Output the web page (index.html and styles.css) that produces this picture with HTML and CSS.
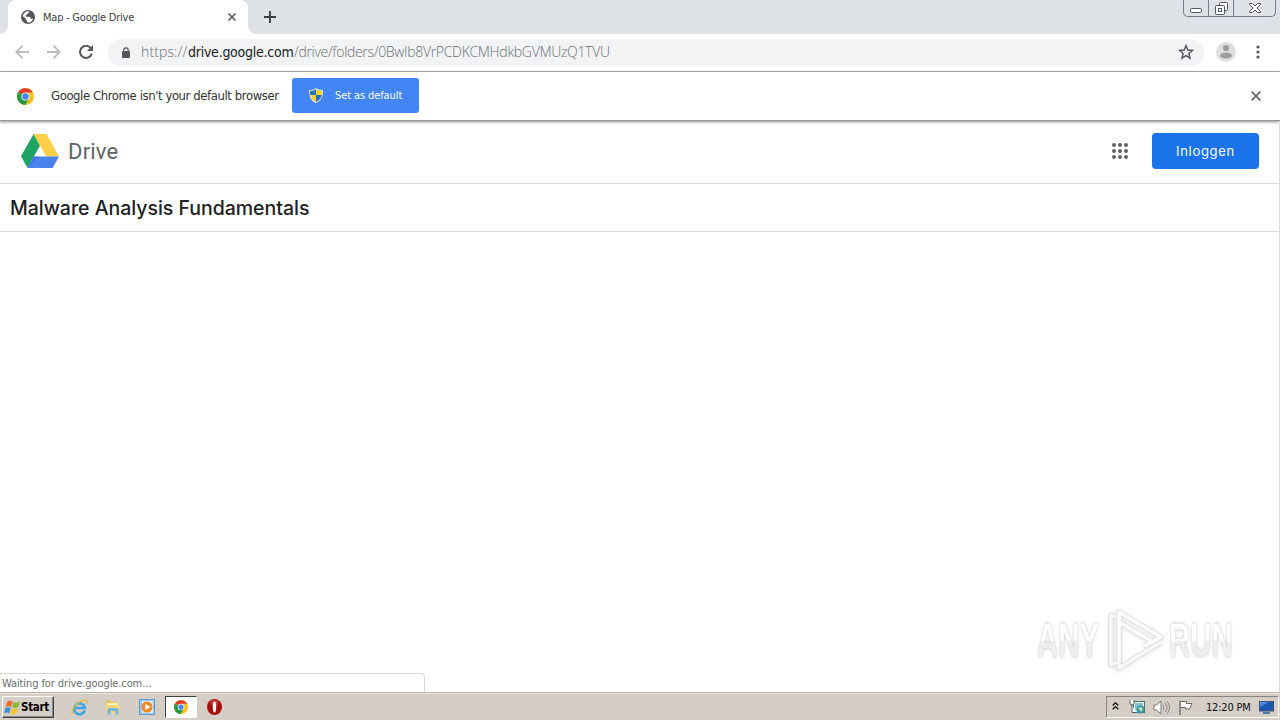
FILE: index.html
```html
<!doctype html>
<html lang="nl">
<head>
<meta charset="UTF-8">
<meta name="viewport" content="width=device-width,initial-scale=1">
<title>Map - Google Drive</title>
<link rel="stylesheet" href="styles.css">
</head>
<body>

<!-- shared chrome logo -->
<svg class="defs" width="0" height="0">
  <symbol id="chrome" viewBox="0 0 24 24">
    <circle cx="12" cy="12" r="12" fill="#fbc116"/>
    <path d="M12 12L1.6 6A12 12 0 0 1 22.4 6.5H12z" fill="#e33b2e"/>
    <path d="M1.6 6A12 12 0 0 0 11.5 24L17 14.8 12 12z" fill="#249a41"/>
    <circle cx="12" cy="12" r="5.7" fill="#fff"/>
    <circle cx="12" cy="12" r="4.5" fill="#4285f4"/>
  </symbol>
</svg>

<!-- ========================  TABS  ======================== -->
<header class="tabstrip">
  <div class="tab">
    <svg class="globe" width="14" height="14" viewBox="0 0 14 14"><circle cx="7" cy="7" r="7" fill="#54585d"/><path d="M8.3 1.5c-1 1.3-.4 2-1.8 2.2-1.2.2-.6 1.7-1.8 1.8v1.2h3.6c1.4.2.7 2 2.1 2.1h1.8A5.3 5.3 0 0 1 6 12.2v-1.7c-1.5-.2-1-2-1.8-2.6L1.7 6.3A5.5 5.5 0 0 1 8.3 1.5z" fill="#fff"/></svg>
    <span class="tab-title">Map - Google Drive</span>
    <svg class="tab-close" width="8" height="8" viewBox="0 0 8 8"><path d="M.5.5l7 7M7.5.5l-7 7" stroke="#5f6368" stroke-width="1.6"/></svg>
  </div>
  <svg class="new-tab" width="12" height="12" viewBox="0 0 12 12"><path d="M6 0v12M0 6h12" stroke="#3c4043" stroke-width="1.9"/></svg>
  <div class="window-buttons">
    <span class="wb"><svg width="12" height="5" viewBox="0 0 12 5"><rect x=".5" y=".5" width="11" height="4" rx="1" fill="#fff" stroke="#50545f"/></svg></span>
    <span class="wb"><svg width="13" height="13" viewBox="0 0 13 13" fill="#fff" stroke="#50545f"><rect x="4.5" y=".5" width="8" height="8" rx="1"/><rect x=".5" y="3.5" width="9" height="9" rx="1"/><rect x="3.5" y="6.5" width="3" height="3"/></svg></span>
    <span class="wb wide"><svg width="12" height="10" viewBox="0 0 12 10"><path d="M.5.5h3L6 3 8.5.5h3v1L8 5l3.500 3.500v1h-3L6 7 3.500 9.500h-3v-1L4 5 .5 1.500z" fill="#fff" stroke="#50545f"/></svg></span>
  </div>
</header>

<!-- ========================  TOOLBAR  ===================== -->
<div class="toolbar">
  <svg width="14" height="14" viewBox="0 0 14 14" fill="none" stroke="#b9bbbd" stroke-width="1.8"><path d="M14 7H1.500M7.500 .7L1.300 7l6.200 6.300"/></svg>
  <svg width="14" height="14" viewBox="0 0 14 14" fill="none" stroke="#b9bbbd" stroke-width="1.8"><path d="M0 7h12.500M6.500 .7L12.700 7l-6.200 6.300"/></svg>
  <svg width="14" height="14" viewBox="0 0 14 14"><path d="M11.800 3.200A6 6 0 1 0 12.800 8.600" fill="none" stroke="#54585d" stroke-width="2"/><path d="M14 0v6H8z" fill="#54585d"/></svg>
  <div class="omnibox">
    <svg class="lock" width="8" height="11" viewBox="0 0 8 11"><rect y="4" width="8" height="7" rx="1" fill="#54585d"/><path d="M1.800 5V3a2.200 2.200 0 0 1 4.400 0v2" fill="none" stroke="#54585d" stroke-width="1.2"/></svg>
    <span class="url"><i>https://</i><b>drive.google.com</b><em>/drive/folders/0BwIb8VrPCDKCMHdkbGVMUzQ1TVU</em></span>
    <svg class="star" width="16" height="16" viewBox="0 0 16 16"><path d="M8 1.700l1.800 4.300 4.700.4-3.600 3.100 1.100 4.600L8 11.600l-4 2.500 1.100-4.600L1.500 6.400l4.700-.4z" fill="none" stroke="#54585d" stroke-width="1.5"/></svg>
  </div>
  <svg class="avatar" width="20" height="20" viewBox="0 0 20 20"><circle cx="10" cy="10" r="10" fill="#dedfe0"/><circle cx="10" cy="6" r="3.1" fill="#9a9c9e"/><ellipse cx="10" cy="13.5" rx="6" ry="3" fill="#9a9c9e"/></svg>
  <svg class="menu-dots" width="4" height="14" viewBox="0 0 4 14" fill="#54585d"><circle cx="2" cy="2" r="1.6"/><circle cx="2" cy="7" r="1.6"/><circle cx="2" cy="12" r="1.6"/></svg>
</div>

<!-- ========================  INFOBAR  ===================== -->
<div class="infobar">
  <svg width="17" height="17"><use href="#chrome"/></svg>
  <span class="infobar-text">Google Chrome isn't your default browser</span>
  <button class="default-button">
    <svg width="14" height="15" viewBox="0 0 14 15"><path d="M7 0c2 1.500 4 2 7 2 0 7-2 11-7 13C2 13 0 9 0 2c3 0 5-.5 7-2z" fill="#e5e7dc"/><path d="M7 1.300V7H1.200L1 3c2.500 0 4.500-.7 6-1.700z" fill="#2c6fbb"/><path d="M7 1.300C8.500 2.300 10.500 3 13 3l-.2 4H7z" fill="#fbd22d"/><path d="M1.200 7H7v6.900C3.500 12.400 1.700 10 1.200 7z" fill="#fbd22d"/><path d="M12.800 7H7v6.900c3.500-1.500 5.300-3.900 5.800-6.900z" fill="#2c6fbb"/></svg>
    <span>Set as default</span>
  </button>
  <svg class="infobar-close" width="10" height="10" viewBox="0 0 10 10"><path d="M.6.6l8.800 8.800M9.400.6L.6 9.400" stroke="#66696d" stroke-width="1.9"/></svg>
</div>

<!-- ========================  PAGE  ======================== -->
<main class="page">
  <div class="drive-bar">
    <svg width="38" height="34" viewBox="0 0 38 34"><path d="M12.600 0L0 22.200 6.500 34 19 11.500z" fill="#1ea362"/><path d="M12.600 0h13L38 22.500H25.300z" fill="#ffcf48"/><path d="M12.700 22.500H38L31.600 34H6.500z" fill="#4b82ee"/><path d="M6.500 34l6.200-11.500 5 0z" fill="#3767d6" opacity=".5"/></svg>
    <span class="drive-name">Drive</span>
    <svg class="apps" width="16" height="16" viewBox="0 0 16 16" fill="#5f6368"><circle cx="2" cy="2" r="2"/><circle cx="8" cy="2" r="2"/><circle cx="14" cy="2" r="2"/><circle cx="2" cy="8" r="2"/><circle cx="8" cy="8" r="2"/><circle cx="14" cy="8" r="2"/><circle cx="2" cy="14" r="2"/><circle cx="8" cy="14" r="2"/><circle cx="14" cy="14" r="2"/></svg>
    <button class="login">Inloggen</button>
  </div>
  <h1><span>Malware Analysis Fundamentals</span></h1>

  <div class="watermark">
    <span class="any">ANY</span>
    <svg width="58" height="64" viewBox="0 0 58 64" fill="none" stroke-linejoin="round"><g stroke="#dedede" stroke-width="5.5"><path d="M11 55V4l42 25L37 38M11 14l34 20"/><path d="M8 8H3v49l6-3M11 52v8l42-26"/></g><g stroke="#fff" stroke-width="3.5"><path d="M11 55V4l42 25-16 9M11 14l34 20"/><path d="M8 8H3v49l6-3M11 52v8l42-26" stroke="#f8f8f8"/></g></svg>
    <span class="run">RUN</span>
  </div>
  <div class="status"><span>Waiting for drive.google.com...</span></div>
</main>

<!-- ========================  TASKBAR  ===================== -->
<footer class="taskbar">
  <button class="start">
    <svg width="17" height="15" viewBox="0 0 17 15"><path d="M3 2c2-1.500 4-1.400 5.500-.3L7 7C5.500 6 3.500 6 1.500 7.200z" fill="#ee6a2c"/><path d="M9.500 2c2 1 4 1 6.500-.3L14.500 7c-2.500 1.300-4.500 1.200-6.500.2z" fill="#86b93c"/><path d="M1.200 8.200c2-1.200 4-1.200 5.500-.2l-1.500 5.200C3.700 12.200 2 12.200 0 13.300z" fill="#3d8fd8"/><path d="M7.700 8.300c2 1 4 1 6.500-.2l-1.500 5.200c-2.500 1.200-4.500 1.100-6.500.1z" fill="#fbc332"/></svg>
    <span>Start</span>
  </button>
  <div class="quick">
    <span class="task"><svg width="17" height="17" viewBox="0 0 17 17" fill="none"><path d="M13.800 11.500A5.500 5.500 0 1 1 14 8.900H4" stroke="#3fa3e0" stroke-width="2.5"/><path d="M1.500 15C-1 12 6 3 12.500 1.200c4-1 4 1.300 2.800 3.800" stroke="#e9b933" stroke-width="1.3"/></svg></span>
    <span class="task"><svg width="16" height="16" viewBox="0 0 16 16"><path d="M1 1.500h5l1 1.500h6v10H1z" fill="#e9c65d"/><path d="M2 4h11v8H2z" fill="#fff2b5"/><path d="M1 6h14v8H1z" fill="#f5d878"/><path d="M2.500 15.500V11Q2.500 9 4.500 9h7q2 0 2 2v4.500h-3V12h-5v3.500z" fill="#70b7e3"/></svg></span>
    <span class="task"><svg width="16" height="16" viewBox="0 0 16 16"><rect x=".5" y=".5" width="15" height="15" fill="#9ac9ed" stroke="#5b9bce"/><rect x="3" y="2" width="11" height="12" fill="#d8ebf8"/><circle cx="8" cy="8" r="5.5" fill="#f18a1c"/><path d="M6.300 4.700v6.600L11.500 8z" fill="#fff"/></svg></span>
    <span class="task active"><svg width="14" height="14"><use href="#chrome"/></svg></span>
    <span class="task opera"><svg width="15" height="16" viewBox="0 0 15 16"><ellipse cx="7.5" cy="8" rx="7.5" ry="8" fill="#a5100f"/><path d="M3 2.500Q7.500-1 12 2.500L10 7H5z" fill="#c94742" opacity=".7"/><ellipse cx="7.5" cy="8" rx="1.7" ry="5.5" fill="#fff"/></svg></span>
  </div>
  <div class="tray">
    <svg class="chevrons" width="7" height="8" viewBox="0 0 7 8" fill="none" stroke="#111" stroke-width="1.3"><path d="M.7 3.500l2.800-2.700 2.800 2.700M.7 7.300l2.800-2.700 2.800 2.700"/></svg>
    <svg class="network" width="17" height="16" viewBox="0 0 17 16"><rect x="4.5" y="2.5" width="11" height="11" fill="#e7eeee" stroke="#477274"/><rect x="6" y="4" width="8" height="7" fill="#84c3c8"/><circle cx="11.5" cy="10.5" r="4" fill="#3795a0"/><path d="M9 9l3-1 2 2-2 3" fill="#b9e5b4"/><path d="M1 1v3q0 2 2 2t2-2V1M3 6v7.500h4" stroke="#59605b" fill="#fff"/></svg>
    <svg class="sound" width="17" height="15" viewBox="0 0 17 15"><path d="M1 5h2.500L8 1v13l-4.500-4H1z" fill="#fff" stroke="#777"/><path d="M10 5q2 2.500 0 5M12 3q4 4.500 0 9M14 1q5 6.500 0 13" fill="none" stroke="#888"/></svg>
    <svg class="flag" width="16" height="15" viewBox="0 0 16 15"><path d="M3 1.500h5.500v2H14L11.500 9H7.500V7.500H3" fill="#fff" stroke="#666"/><path d="M2 .5V15" stroke="#666" stroke-width="1.3"/></svg>
    <span class="clock">12:20 PM</span>
    <svg class="desktop" width="15" height="13" viewBox="0 0 15 13"><rect x=".5" y=".5" width="14" height="9.5" fill="#1b58b3" stroke="#40536f"/><path d="M1 1h9L1 6z" fill="#4c8ddd"/><path d="M4 12h7" stroke="#53769e" stroke-width="2"/></svg>
  </div>
</footer>

</body>
</html>
```

FILE: styles.css
```css
html,body{margin:0;padding:0;height:100%}
*{box-sizing:border-box}
body{
  display:flex;flex-direction:column;
  width:1280px;height:720px;overflow:hidden;
  background:#fff;color:#333;
  font-family:"DejaVu Sans Condensed","DejaVu Sans",Tahoma,sans-serif;
  font-stretch:condensed}
svg{display:block;flex:none}
button{border:0;padding:0;font:inherit}
span{white-space:nowrap}
.defs{position:absolute}

/* ---- Tabs ----------------------------------------------------------- */
.tabstrip{height:34px;flex:none;background:#dee1e6;display:flex;align-items:flex-start;padding-left:8px}
.tab{
  position:relative;width:240px;height:34px;background:#fff;border-radius:8px 8px 0 0;
  display:flex;align-items:center;padding:0 12px 0 13px}
.tab::before,.tab::after{content:"";position:absolute;bottom:0;width:8px;height:8px}
.tab::before{left:-8px;background:radial-gradient(circle at 0 0,#dee1e6 7.5px,#fff 8px)}
.tab::after{right:-8px;background:radial-gradient(circle at 100% 0,#dee1e6 7.5px,#fff 8px)}
.tab-title{margin-left:8px;font-size:11px;letter-spacing:-.23px;color:#3c4043}
.tab-close{margin-left:auto}
.new-tab{margin:11px 0 0 16px}
.window-buttons{
  display:flex;width:93px;height:17px;margin:0 4px 0 auto;
  border:1px solid #777c88;border-top:0;border-radius:0 0 5px 5px}
.wb{width:25px;display:flex;align-items:center;justify-content:center;border-right:1px solid #777c88}
.wb:first-child{padding-top:4px}
.wb.wide{width:41px;border-right:0}

/* ---- Toolbar -------------------------------------------------------- */
.toolbar{
  height:38px;flex:none;border-bottom:1px solid #a9adad;
  display:flex;align-items:center;gap:18px;padding:0 0 1px 15px}
.omnibox{
  width:1096px;height:27px;margin-left:-3px;border-radius:14px;background:#f1f3f4;
  display:flex;align-items:center;padding:0 10px 0 14px}
.url{display:flex;align-items:baseline;margin:0 0 1px 11px;font-size:14px;color:#6c7075}
.url i,.url em{font-family:"Open Sans","Noto Sans",sans-serif;font-style:normal;font-weight:300;font-stretch:normal}
.url i{width:47px;letter-spacing:.12px}
.url em{letter-spacing:-.32px}
.url b{width:106px;font-weight:400;letter-spacing:-.25px;color:#202124}
.star{margin-left:auto}
.avatar{margin-left:-6px}
.menu-dots{margin-left:2px}

/* ---- Infobar -------------------------------------------------------- */
.infobar{
  height:49px;flex:none;border-bottom:1px solid #969696;
  display:flex;align-items:center;padding:0 19px 0 17px;position:relative;
  box-shadow:0 1px 3px rgba(0,0,0,.45)}
.infobar-text{width:228px;margin:0 0 2px 17px;font-size:13px;letter-spacing:-.42px}
.default-button{
  width:127px;height:35px;margin:0 0 1px 13px;border-radius:3px;background:#4285f4;color:#fff;
  display:flex;align-items:center;padding-left:17px;font-size:11px;letter-spacing:-.1px}
.default-button span{margin-left:12px}
.infobar-close{margin-left:auto}

/* ---- Drive page ----------------------------------------------------- */
.page{position:relative;flex:1;border-right:1px solid #dcdcdc}
.drive-bar{
  height:63px;border-bottom:1px solid #dadce0;
  display:flex;align-items:center;padding:0 20px 2px 21px}
.drive-name{margin-left:9px;font:22px Roboto,sans-serif;letter-spacing:.2px;color:#5f6368}
.apps{margin-left:auto}
.login{
  width:107px;height:36px;margin-left:24px;border-radius:4px;background:#1a73e8;color:#fff;
  font:400 13px Inter,sans-serif;letter-spacing:.7px}
h1{
  height:48px;margin:0;padding-left:10px;border-bottom:1px solid #dadce0;
  display:flex;align-items:center;
  font:500 19.500px Inter,sans-serif;letter-spacing:-.02px;color:#202124}

/* ---- Watermark ------------------------------------------------------ */
.watermark{
  position:absolute;right:46px;bottom:20px;
  display:flex;align-items:center;gap:5px;
  font:700 46px/1 "Liberation Sans",sans-serif}
.watermark svg{margin:0 -2px 0 2px;filter:drop-shadow(0 1px 2px rgba(0,0,0,.1))}
.any,.run{
  width:64px;transform-origin:0 50%;transform:scaleX(.64);color:transparent;
  background:linear-gradient(#fff 52%,#efefef 52%);background-clip:text;-webkit-background-clip:text;
  filter:drop-shadow(0 0 2px rgba(0,0,0,.26))}
.any{width:97px;margin-right:-33px}
.run{width:102px;margin-right:-38px}

/* ---- Status bubble -------------------------------------------------- */
.status{
  position:absolute;left:0;bottom:0;width:425px;height:19px;
  border:1px solid #d9d9d9;border-width:1px 1px 0 0;border-radius:0 4px 0 0;background:#fff;
  display:flex;align-items:center;padding-left:2px;
  font-size:11px;letter-spacing:-.1px;color:#6a6d70}

/* ---- Taskbar -------------------------------------------------------- */
.taskbar{
  height:28px;flex:none;background:#d4cec7;border-top:1px solid #b5b3ae;
  box-shadow:inset 0 1px #ece9e4;
  display:flex;align-items:center;padding-left:2px}
.start{
  width:52px;height:22px;margin-top:1px;background:#d4cec7;
  border:1px solid;border-color:#fff #404040 #404040 #fff;box-shadow:inset -1px -1px #888;
  display:flex;align-items:center;padding-left:1px;
  font-size:11.5px;font-weight:700;letter-spacing:-.3px;color:#000}
.quick{display:flex;align-items:center;margin-left:8px;padding-top:1px}
.task{width:34px;height:22px;display:flex;align-items:center;justify-content:center}
.task.active{width:32px;margin:0 1px;background:#fff;border:1px solid;border-color:#404040 #fff #fff #404040}
.task.opera{width:32px}
.tray{
  width:173px;height:22px;margin:1px 1px 0 auto;
  border:1px solid;border-color:#87837e #fff #fff #87837e;
  display:flex;align-items:center;padding-left:5px}
.chevrons{margin-bottom:2px}
.network{margin-left:10px}
.sound{margin-left:7px}
.flag{margin-left:8px}
.clock{width:46px;margin-left:12px;font-size:11px;letter-spacing:-.2px;color:#111}
.desktop{margin-left:7px}
```
